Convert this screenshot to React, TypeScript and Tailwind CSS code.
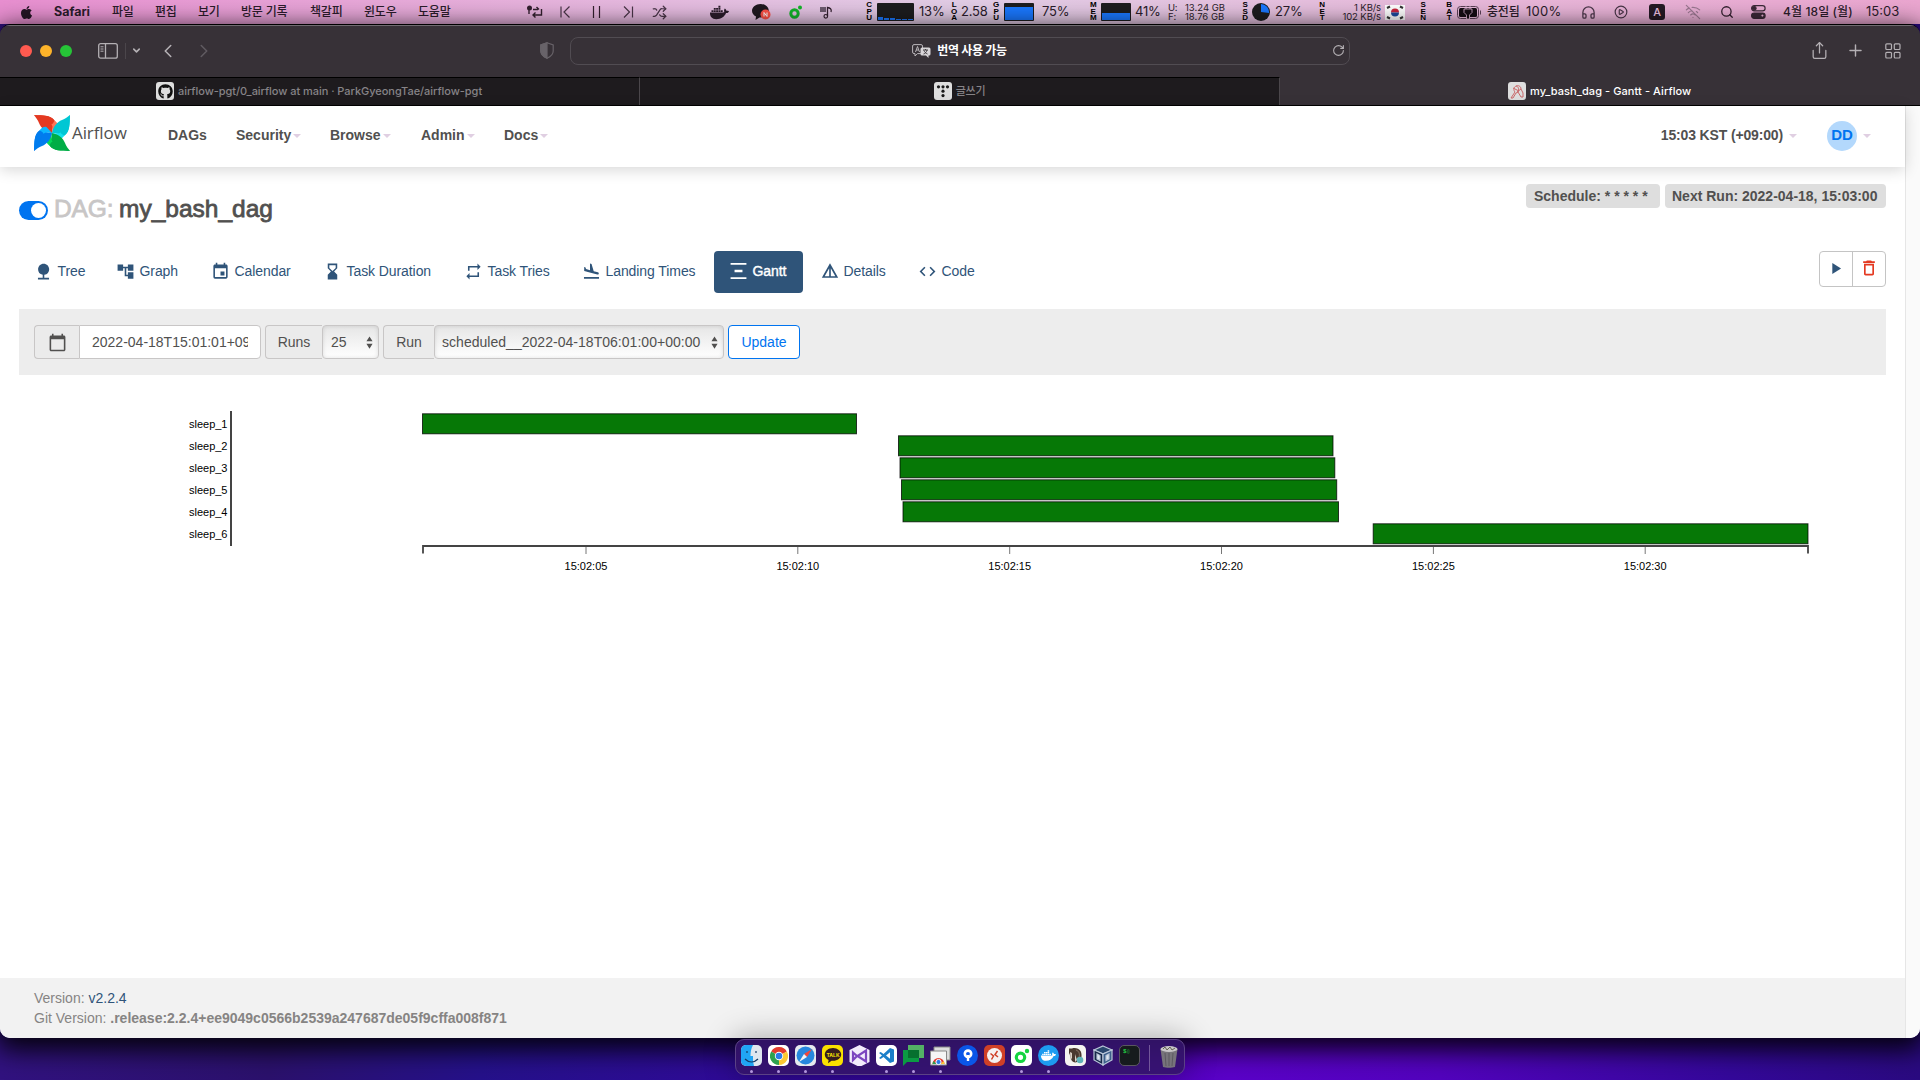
import type { ReactNode } from "react";
import { FaApple, FaDocker, FaGithub } from "react-icons/fa";
import {
  MdAccountTree,
  MdCalendarToday,
  MdCode,
  MdDeleteOutline,
  MdEvent,
  MdFlightLand,
  MdHourglassBottom,
  MdNature,
  MdPlayArrow,
  MdRepeat,
  MdVerticalDistribute,
} from "react-icons/md";
import {
  ChevronDown,
  ChevronLeft,
  ChevronRight,
  CirclePlay,
  Headphones,
  Plus,
  RotateCw,
  Search,
  Share,
  Shuffle,
  WifiOff,
} from "lucide-react";

const MENUS = [
  { label: "파일", w: "w-[43px]" },
  { label: "편집", w: "w-[43px]" },
  { label: "보기", w: "w-[43px]" },
  { label: "방문 기록", w: "w-[69px]" },
  { label: "책갈피", w: "w-[54px]" },
  { label: "윈도우", w: "w-[54px]" },
  { label: "도움말", w: "w-[108px]" },
];

const NAV = [
  { label: "Security", w: "w-[94px]" },
  { label: "Browse", w: "w-[91px]" },
  { label: "Admin", w: "w-[83px]" },
  { label: "Docs", w: "w-[60px]" },
];

const TASKS = [
  { id: "sleep_1", start: 422.5, end: 856.5 },
  { id: "sleep_2", start: 898.5, end: 1333 },
  { id: "sleep_3", start: 900, end: 1334.8 },
  { id: "sleep_5", start: 901.5, end: 1336.7 },
  { id: "sleep_4", start: 903, end: 1338.5 },
  { id: "sleep_6", start: 1373.2, end: 1808 },
];

const TICKS = [
  { x: 586, label: "15:02:05" },
  { x: 797.8, label: "15:02:10" },
  { x: 1009.7, label: "15:02:15" },
  { x: 1221.5, label: "15:02:20" },
  { x: 1433.4, label: "15:02:25" },
  { x: 1645.2, label: "15:02:30" },
];

function Slot({ w, children }: { w: string; children?: ReactNode }) {
  return <div className={`flex h-full shrink-0 items-center whitespace-nowrap ${w}`}>{children}</div>;
}

function Stacked({ text, w }: { text: string; w: string }) {
  return (
    <div className={`flex shrink-0 flex-col font-['Liberation_Sans',sans-serif] text-[8px] leading-[6.700px] font-bold text-black ${w}`}>
      {text.split("").map((c, i) => (
        <span key={i} className="w-[6px] text-center">
          {c}
        </span>
      ))}
    </div>
  );
}

function MenuBar() {
  return (
    <div className="flex h-6 shrink-0 items-center bg-linear-to-r from-[#e88fd0] via-[#e2cde6] to-[#eba6d0] pl-[19px] text-[12px] font-medium tracking-[-0.2px] text-[#2b1c2b]">
      <Slot w="w-[35px]">
        <FaApple className="text-[15px] text-[#251525]" />
      </Slot>
      <Slot w="w-[58px]">
        <span className="text-[12.500px] font-bold tracking-normal">Safari</span>
      </Slot>
      {MENUS.map((m) => (
        <Slot key={m.label} w={m.w}>
          {m.label}
        </Slot>
      ))}
      <Slot w="w-[34px]">
        <svg width="17" height="14" viewBox="0 0 17 14" fill="none" stroke="#33202f" strokeWidth="1.4">
          <circle cx="3.5" cy="3" r="1.8" fill="#33202f" />
          <path d="M3 4v5M7 4.500h5M10.500 2l2.500 2.500M15.500 4v6H7M9.500 7.500L7 10l2.500 2.500" />
        </svg>
      </Slot>
      <Slot w="w-[32px]">
        <svg width="11" height="12" viewBox="0 0 11 12" fill="none" stroke="#4a3548" strokeWidth="1.2">
          <path d="M1 .5v11M9.500 .5L4 6l5.500 5.500" />
        </svg>
      </Slot>
      <Slot w="w-[31px]">
        <svg width="9" height="12" viewBox="0 0 9 12" stroke="#33202f" strokeWidth="1.2">
          <path d="M1.500 0v12M7.500 0v12" />
        </svg>
      </Slot>
      <Slot w="w-[29px]">
        <svg width="11" height="12" viewBox="0 0 11 12" fill="none" stroke="#4a3548" strokeWidth="1.2">
          <path d="M9.500 .5v11M1 .5L6.500 6L1 11.500" />
        </svg>
      </Slot>
      <Slot w="w-[58px]">
        <Shuffle size={15} strokeWidth={2} color="#4a3548" />
      </Slot>
      <Slot w="w-[42px]">
        <FaDocker className="text-[19px]" />
      </Slot>
      <Slot w="w-[37px]">
        <svg width="19" height="17" viewBox="0 0 19 17">
          <path d="M8.500 0C3.800 0 0 3 0 6.800c0 2.400 1.500 4.500 4 5.700L3.500 16l4-2.600h1c4.600 0 8.300-3 8.300-6.700S13 0 8.500 0z" fill="#1f1720" />
          <circle cx="13.500" cy="10.500" r="5" fill="#ff5147" />
          <path d="M12 12.500v-4l3 4v-4" fill="none" stroke="#fff" strokeWidth="1" />
        </svg>
      </Slot>
      <Slot w="w-[31px]">
        <svg width="14" height="14" viewBox="0 0 14 14">
          <circle cx="5.500" cy="8.500" r="3.700" fill="none" stroke="#12b428" strokeWidth="3" />
          <circle cx="11" cy="2.500" r="2" fill="#12b428" />
        </svg>
      </Slot>
      <Slot w="w-[46px]">
        <svg width="13" height="13" viewBox="0 0 13 13">
          <path d="M0 1h6v5H0z" fill="#6d5a6e" />
          <path d="M7.500 10V1.500C10 2 12 3 11 6" fill="none" stroke="#33202f" strokeWidth="1.300" />
          <circle cx="5.800" cy="10.300" r="1.800" fill="none" stroke="#33202f" strokeWidth="1.200" />
        </svg>
      </Slot>
      <Stacked text="CPU" w="w-[11px]" />
      <Slot w="w-[42px]">
        <div className="flex h-[18px] w-[37px] items-end gap-px rounded-[1px] bg-[#1d1d1f] px-px pb-px">
          <div className="h-[3px] w-[5px] bg-[#1a78ff]" />
          <div className="h-[2px] w-[5px] bg-[#1a78ff]" />
          <div className="h-[2px] w-[5px] bg-[#1a78ff]" />
          <div className="h-px w-[5px] bg-[#1a78ff]" />
          <div className="h-px w-[5px] bg-[#1a78ff]" />
          <div className="h-px w-[5px] bg-[#1a78ff]" />
        </div>
      </Slot>
      <Slot w="w-[32px]">
        <span className="text-[13px] font-normal">13%</span>
      </Slot>
      <Stacked text="LOA" w="w-[10px]" />
      <Slot w="w-[32px]">
        <span className="text-[13px] font-normal">2.58</span>
      </Slot>
      <Stacked text="GPU" w="w-[11px]" />
      <Slot w="w-[38px]">
        <div className="flex h-[18px] w-[30px] flex-col justify-end rounded-[1px] bg-[#1d1d1f] p-px">
          <div className="h-[13px] bg-[#1a78ff]" />
        </div>
      </Slot>
      <Slot w="w-[48px]">
        <span className="text-[13px] font-normal">75%</span>
      </Slot>
      <Stacked text="MEM" w="w-[11px]" />
      <Slot w="w-[34px]">
        <div className="flex h-[18px] w-[30px] flex-col justify-end rounded-[1px] bg-[#1d1d1f] p-px">
          <div className="h-[7px] bg-[#1a78ff]" />
        </div>
      </Slot>
      <Slot w="w-[33px]">
        <span className="text-[13px] font-normal">41%</span>
      </Slot>
      <div className="flex w-[17px] shrink-0 flex-col text-[9.500px] leading-[9px] font-normal">
        <span>U:</span>
        <span>F:</span>
      </div>
      <div className="flex w-[57px] shrink-0 flex-col text-[9.500px] leading-[9px] font-normal tracking-normal whitespace-nowrap">
        <span>13.24 GB</span>
        <span>18.76 GB</span>
      </div>
      <Stacked text="SSD" w="w-[10px]" />
      <Slot w="w-[23px]">
        <svg width="18" height="18" viewBox="0 0 18 18">
          <circle cx="9" cy="9" r="9" fill="#1d1d1f" />
          <path d="M9 9V1a8 8 0 0 1 8 9z" fill="#1a78ff" />
        </svg>
      </Slot>
      <Slot w="w-[44px]">
        <span className="text-[13px] font-normal">27%</span>
      </Slot>
      <Stacked text="NET" w="w-[14px]" />
      <div className="flex w-[48px] shrink-0 flex-col items-end text-[9.500px] leading-[9px] font-normal tracking-[-0.100px] whitespace-nowrap">
        <span>1 KB/s</span>
        <span>102 KB/s</span>
      </div>
      <div className="w-[4px] shrink-0" />
      <Slot w="w-[35px]">
        <svg width="20" height="15" viewBox="0 0 20 15">
          <path fill="#fff" d="M0 0h20v15H0z" />
          <path d="M6 7.500a4 4 0 0 1 8 0z" fill="#c8243c" />
          <path d="M6 7.500a4 4 0 0 0 8 0z" fill="#1d4a9c" />
          <path d="M2 3l3-1.500M15 1.500L18 3M2 12l3 1.500M15 13.500l3-1.500" stroke="#333" strokeWidth="2" />
        </svg>
      </Slot>
      <Stacked text="SEN" w="w-[26px]" />
      <Stacked text="BAT" w="w-[11px]" />
      <Slot w="w-[30px]">
        <svg width="25" height="13" viewBox="0 0 25 13">
          <rect x=".5" y=".5" width="21" height="12" rx="3" fill="none" stroke="#5b4257" />
          <rect x="2" y="2" width="18" height="9" rx="1.500" fill="#150d14" />
          <path d="M9 0v3M13 0v3M7 3h8v3.500L12.500 9v4h-3V9L7 6.500z" fill="#150d14" stroke="#e7bddd" strokeWidth=".8" />
          <path d="M23.500 4.500v4" stroke="#5b4257" />
        </svg>
      </Slot>
      <Slot w="w-[39px]">충전됨</Slot>
      <Slot w="w-[55px]">
        <span className="text-[13px] font-normal tracking-[0.300px]">100%</span>
      </Slot>
      <Slot w="w-[33px]">
        <Headphones size={15} strokeWidth={2} color="#4a3548" />
      </Slot>
      <Slot w="w-[35px]">
        <CirclePlay size={14} strokeWidth={2} color="#4a3548" />
      </Slot>
      <Slot w="w-[36px]">
        <span className="flex size-4 items-center justify-center rounded-[3px] bg-[#251a25] text-[11px] text-[#eec3e2]">A</span>
      </Slot>
      <Slot w="w-[35px]">
        <WifiOff size={16} strokeWidth={1.800} color="#9c7892" />
      </Slot>
      <Slot w="w-[31px]">
        <Search size={14} strokeWidth={2.200} color="#33202f" />
      </Slot>
      <Slot w="w-[32px]">
        <svg width="15" height="14" viewBox="0 0 15 14" fill="none" stroke="#3b2837" strokeWidth="1.200">
          <rect x=".6" y=".6" width="13.500" height="5.300" rx="2.600" />
          <circle cx="3.300" cy="3.300" r="1.800" fill="#3b2837" />
          <rect x=".6" y="8" width="13.500" height="5.300" rx="2.600" fill="#3b2837" />
          <circle cx="11.400" cy="10.600" r="1.700" fill="#e9b0d3" />
        </svg>
      </Slot>
      <Slot w="w-[83px]">
        <span className="tracking-[0.100px]">4월 18일 (월)</span>
      </Slot>
      <span className="text-[13px] font-normal tracking-normal">15:03</span>
    </div>
  );
}

function Toolbar() {
  return (
    <div className="flex h-[52px] shrink-0 items-center border-t border-[#6f6b70] bg-[#373137] pb-[2px] text-[#b4b0b4]">
      <div className="flex w-[98px] gap-2 pl-5">
        <div className="size-3 rounded-full bg-[#ff5a50]" />
        <div className="size-3 rounded-full bg-[#fdb32a]" />
        <div className="size-3 rounded-full bg-[#26c437]" />
      </div>
      <svg width="20" height="16" viewBox="0 0 20 16" fill="none" stroke="currentColor" strokeWidth="1.300">
        <rect x=".7" y=".7" width="18.600" height="14.500" rx="2" />
        <path d="M7.500 1v14" />
        <path d="M2.500 3.800h3M2.500 6h3M2.500 8.200h3" strokeWidth="1" />
      </svg>
      <div className="ml-[7px] h-4 w-px bg-[#4b464b]" />
      <ChevronDown className="ml-[5px]" size={11} strokeWidth={3.500} />
      <ChevronLeft className="ml-[15px]" size={22} strokeWidth={1.700} />
      <ChevronRight className="ml-[14px] text-[#5f5a60]" size={22} strokeWidth={1.700} />
      <svg className="ml-[325px]" width="14" height="17" viewBox="0 0 14 17" fill="none" stroke="#686369" strokeWidth="1.200">
        <path d="M7 .8l6.200 2.200v6c0 3.500-3 5.800-6.200 7.200C3.800 14.800.8 12.500.8 9V3z" />
        <path d="M7 .8v15.400C3.800 14.800.8 12.500.8 9V3z" fill="#686369" />
      </svg>
      <div className="ml-4 flex h-7 w-[780px] items-center rounded-lg border border-[#514c52] pr-[4px]">
        <div className="flex grow items-center justify-center pl-[16px] text-[12px] font-bold tracking-[-0.300px] text-white">
          <svg className="mr-[6px]" width="19" height="14" viewBox="0 0 19 14">
            <path d="M2 .6h7a1.500 1.500 0 0 1 1.500 1.500v6A1.500 1.500 0 0 1 9 9.600H5.500L3 12V9.600H2A1.500 1.500 0 0 1 .6 8V2A1.500 1.500 0 0 1 2 .6z" fill="none" stroke="#bab6ba" />
            <path d="M3.500 8L5.500 2.500 7.500 8M4.200 6h2.600" fill="none" stroke="#bab6ba" />
            <path d="M10 3.500h7A1.500 1.500 0 0 1 18.500 5v5a1.500 1.500 0 0 1-1.500 1.500h-.5V14L14 11.500h-4A1.500 1.500 0 0 1 8.500 10V5A1.500 1.500 0 0 1 10 3.500z" fill="#d8d5d8" />
            <path d="M11 6h5M13.500 5v1M11.500 10c2-.5 3-2 3.500-4M12 6.500c.5 1.500 2 3 3.500 3.500" fill="none" stroke="#373137" strokeWidth=".9" />
          </svg>
          번역 사용 가능
        </div>
        <RotateCw size={13} strokeWidth={2} />
      </div>
      <Share className="ml-[460px]" size={19} strokeWidth={1.600} />
      <Plus className="ml-[17px]" size={19} strokeWidth={1.800} />
      <svg className="ml-[20px]" width="16" height="16" viewBox="0 0 16 16" fill="none" stroke="currentColor" strokeWidth="1.200">
        <rect x=".8" y=".8" width="5.700" height="5.700" rx="1" />
        <rect x="9.300" y=".8" width="5.700" height="5.700" rx="1" />
        <rect x=".8" y="9.300" width="5.700" height="5.700" rx="1" />
        <rect x="9.300" y="9.300" width="5.700" height="5.700" rx="1" />
      </svg>
    </div>
  );
}

function TabBar() {
  return (
    <div className="grid h-[29px] shrink-0 grid-cols-3 border-b border-black bg-[#373137] text-[11px] font-medium text-[#868387]">
      <div className="flex items-center justify-center border-t border-r border-t-black border-r-[#4b474b] bg-[#1e1b1e] pb-px">
        <span className="mr-1 flex size-[18px] items-center justify-center rounded-[3px] bg-[#dedede]">
          <FaGithub className="text-[15px] text-[#111]" />
        </span>
        <span className="w-[305px] tracking-[-0.040px] whitespace-nowrap">airflow-pgt/0_airflow at main · ParkGyeongTae/airflow-pgt</span>
      </div>
      <div className="flex items-center justify-center border-t border-r border-t-black border-r-[#4b474b] bg-[#1e1b1e] pb-px">
        <span className="mr-1 flex size-[18px] items-center justify-center rounded-[3px] bg-[#dedede]">
          <svg width="14" height="14" viewBox="0 0 14 14" fill="#1a1a1a">
            <circle cx="2.500" cy="2.800" r="1.600" />
            <circle cx="7" cy="2.800" r="1.600" />
            <circle cx="11.500" cy="2.800" r="1.600" />
            <circle cx="7" cy="7.200" r="1.600" />
            <circle cx="7" cy="11.600" r="1.600" />
          </svg>
        </span>
        <span className="tracking-[-0.300px]">글쓰기</span>
      </div>
      <div className="flex items-center justify-center text-white">
        <span className="mr-1 flex size-[18px] items-center justify-center rounded-[3px] bg-[#dedede]">
          <svg width="16" height="16" viewBox="0 0 16 16" fill="none" stroke="#c9686a" strokeWidth="1">
            <path d="M2 15l4-6c-2-2-1-5 1-6s5 0 5 3l2 4v4h-2l-3-5-2 1-3 5H2zM7 3c3 1 3 3 2 6M4 5l6 3M12 6L8 9" />
          </svg>
        </span>
        <span className="w-[162px] tracking-[0.080px] whitespace-nowrap">my_bash_dag - Gantt - Airflow</span>
      </div>
    </div>
  );
}

function Logo() {
  return (
    <svg className="mb-[6px]" width="36" height="36" viewBox="0 0 36 36">
      {[
        ["#e43921", "#ff7557", "rotate(0 18 18)"],
        ["#00c7d4", "#11e1ee", "rotate(90 18 18)"],
        ["#00ad46", "#04d659", "rotate(180 18 18)"],
        ["#017cee", "#0cb6ff", "rotate(270 18 18)"],
      ].map(([dark, light, turn]) => (
        <g key={dark} transform={turn}>
          <path d="M0 0C9 .5 16 0 20 5L18 18C11 16.500 7 13 5 8 4 5 1.500 2 0 0z" fill={dark} />
          <path d="M20 5C23.500 7.500 25 10.500 24 12.500L18 18C19 14 19 10.500 16.500 8.500z" fill={light} />
          <path d="M0 0C9 .5 17 0 20.500 5.500 19.500 8 18.500 9 17.500 9.500z" fill={dark} />
        </g>
      ))}
    </svg>
  );
}

function Caret({ className = "" }: { className?: string }) {
  return <span className={`inline-block border-x-4 border-t-4 border-x-transparent border-t-[#e0cfe2] ${className}`} />;
}

function PageHeader() {
  return (
    <div className="z-10 flex h-[61px] shrink-0 items-center bg-white pb-[2px] pl-[34px] text-[14px] font-bold text-[#51504f] shadow-[0_3px_14px_rgba(0,0,0,0.160)]">
      <Logo />
      <span className="ml-[2px] w-[96px] pb-[5px] font-['Open_Sans',sans-serif] text-[17px] font-normal tracking-[-0.100px]">Airflow</span>
      <span className="w-[68px]">DAGs</span>
      {NAV.map((n) => (
        <div key={n.label} className={`flex items-center ${n.w}`}>
          {n.label}
          <Caret className="ml-[2px]" />
        </div>
      ))}
      <span className="ml-auto tracking-[-0.150px]">15:03 KST (+09:00)</span>
      <Caret className="ml-[6px]" />
      <span className="ml-[30px] flex size-[30px] items-center justify-center rounded-full bg-[#b3d8fc] text-[15px] text-[#0074f0]">DD</span>
      <Caret className="mr-[34px] ml-[6px]" />
    </div>
  );
}

const DetailsIcon = () => (
  <svg width="18" height="18" viewBox="0 0 24 24" fill="none" stroke="currentColor" strokeWidth="2.200">
    <path d="M12 4L3 20h18zM12 5v15" />
  </svg>
);

const VIEWS: { label: string; w: string; icon: ReactNode; active?: boolean }[] = [
  { label: "Tree", w: "w-[80px]", icon: <MdNature /> },
  { label: "Graph", w: "w-[93px]", icon: <MdAccountTree /> },
  { label: "Calendar", w: "w-[110px]", icon: <MdEvent /> },
  { label: "Task Duration", w: "w-[139px]", icon: <MdHourglassBottom /> },
  { label: "Task Tries", w: "w-[116px]", icon: <MdRepeat /> },
  { label: "Landing Times", w: "w-[145px]", icon: <MdFlightLand /> },
  { label: "Gantt", w: "w-[89px]", icon: <MdVerticalDistribute />, active: true },
  { label: "Details", w: "w-[96px]", icon: <DetailsIcon /> },
  { label: "Code", w: "w-[88px]", icon: <MdCode /> },
];

function DagHeading() {
  return (
    <div className="flex justify-between pt-[17px]">
      <div className="flex items-center pt-[12px] pb-px text-[24.500px] leading-[24px]">
        <div className="mt-[4px] mr-[6px] flex h-[19px] w-[29px] justify-end rounded-full bg-[#0074f0] p-[2px]">
          <div className="size-[15px] rounded-full bg-white" />
        </div>
        <span className="w-[65px] pt-px tracking-[-0.100px] text-[#c8c6c6] [-webkit-text-stroke:0.800px]">DAG:</span>
        <span className="pt-px text-[#51504f] [-webkit-text-stroke:0.800px]">my_bash_dag</span>
      </div>
      <div className="flex h-6 gap-[5px] text-[14px] leading-6 font-bold whitespace-nowrap text-[#51504f]">
        <span className="w-[134px] rounded bg-[#dedede] pl-[8px]">Schedule: * * * * *</span>
        <span className="w-[221px] rounded bg-[#dedede] pl-[7px]">Next Run: 2022-04-18, 15:03:00</span>
      </div>
    </div>
  );
}

function ViewTabs() {
  return (
    <div className="mt-[29px] flex justify-between">
      <div className="flex gap-[2px] text-[14px] tracking-[-0.080px] text-[#2f5479]">
        {VIEWS.map((v) => (
          <div
            key={v.label}
            className={`flex h-[42px] shrink-0 items-center gap-[4.500px] rounded pb-[2px] pl-[15px] whitespace-nowrap ${v.w} ${
              v.active ? "bg-[#2f5479] text-white [-webkit-text-stroke:0.400px]" : ""
            }`}
          >
            <span className={`flex w-[19px] shrink-0 justify-center ${v.active ? "text-[22px]" : "text-[19px]"}`}>{v.icon}</span>
            {v.label}
          </div>
        ))}
      </div>
      <div className="flex h-9 w-[67px] divide-x divide-[#c4c4c4] rounded border border-[#c4c4c4] bg-white">
        <div className="flex flex-1 items-center justify-center pr-px pb-px text-[#2f5479]">
          <MdPlayArrow size={19} />
        </div>
        <div className="flex flex-1 items-center justify-center pr-px pb-[2px] text-[#e43921]">
          <MdDeleteOutline size={20} />
        </div>
      </div>
    </div>
  );
}

function SelectArrows() {
  return (
    <svg width="7" height="13" viewBox="0 0 8 14" fill="#51504f">
      <path d="M4 0l3.500 5.500h-7zM4 14L.5 8.500h7z" />
    </svg>
  );
}

function FilterBar() {
  const addon = "flex items-center justify-center rounded-l border border-r-0 border-[#c8c6c6] bg-[#ebebeb]";
  const select =
    "flex items-center justify-between rounded border border-[#c8c6c6] bg-linear-to-b from-[#e6e6e6] to-white pr-[5px] shadow-[inset_0_0_4px_rgba(0,0,0,0.120)]";
  return (
    <div className="mt-4 flex h-[66px] items-center bg-[#ededed] pl-[15px] text-[14px] whitespace-nowrap text-[#51504f]">
      <div className="flex h-[34px]">
        <div className={`w-[45px] ${addon}`}>
          <MdCalendarToday size={19} />
        </div>
        <div className="flex w-[182px] rounded-r border border-[#c8c6c6] bg-white px-3">
          <input className="w-full min-w-0 outline-none" type="text" defaultValue="2022-04-18T15:01:01+09:00" />
        </div>
      </div>
      <div className="ml-1 flex h-[34px]">
        <div className={`w-[57px] ${addon}`}>Runs</div>
        <div className={`w-[57px] pl-[8px] ${select}`}>
          25
          <SelectArrows />
        </div>
      </div>
      <div className="ml-1 flex h-[34px]">
        <div className={`w-[51px] ${addon}`}>Run</div>
        <div className={`w-[290px] pl-[7px] ${select}`}>
          <span className="tracking-[0.030px]">scheduled__2022-04-18T06:01:00+00:00</span>
          <SelectArrows />
        </div>
      </div>
      <div className="ml-1 flex h-[34px] w-[72px] items-center justify-center rounded border border-[#0074f0] bg-white text-[#0074f0]">
        Update
      </div>
    </div>
  );
}

// Chart origin sits at page x=19, y=375
function GanttChart() {
  return (
    <svg className="block" width="1867" height="215" viewBox="19 375 1867 215" fontSize="11" fill="#000">
      <path d="M231 411v135" stroke="#444" strokeWidth="2" />
      {TASKS.map((t, i) => (
        <g key={t.id}>
          <text x="227.500" y={428 + i * 22} textAnchor="end">
            {t.id}
          </text>
          <rect x={t.start} y={413.8 + i * 22} width={t.end - t.start} height="20" fill="#067806" stroke="#000" strokeOpacity="0.750" />
        </g>
      ))}
      <path d="M423 553.500V546H1808v7.500" fill="none" stroke="#444" strokeWidth="1.800" />
      {TICKS.map((t) => (
        <g key={t.label}>
          <path d={`M${t.x} 547v7`} stroke="#777" />
          <text x={t.x} y="570" textAnchor="middle">
            {t.label}
          </text>
        </g>
      ))}
    </svg>
  );
}

function DockTile({ children, bg, dot }: { children?: ReactNode; bg: string; dot?: boolean }) {
  return (
    <div className="flex w-[27px] flex-col items-center">
      <div className={`flex size-[21px] items-center justify-center overflow-hidden ${bg}`}>{children}</div>
      <div className={`mt-[4px] size-[3px] rounded-full ${dot ? "bg-[#b296dd]" : ""}`} />
    </div>
  );
}

function ChromeMark({ size }: { size: number }) {
  return (
    <svg width={size} height={size} viewBox="0 0 18 18">
      <path d="M9 9L1.200 4.500A9 9 0 0 1 16.800 4.500z" fill="#e33b2e" />
      <path d="M9 9L16.800 4.500A9 9 0 0 1 9 18z" fill="#fcc934" />
      <path d="M9 9v9A9 9 0 0 1 1.200 4.500z" fill="#2ea14f" />
      <circle cx="9" cy="9" r="4.200" fill="#fff" />
      <circle cx="9" cy="9" r="3.300" fill="#2c7be8" />
    </svg>
  );
}

function Dock() {
  return (
    <div className="absolute top-[1039px] left-[735px] flex h-9 w-[450px] rounded-[9px] border border-[#5b4285] bg-[#34146a]/90 pt-[5px] pl-[2px] shadow-[0_0_30px_2px_rgba(0,0,0,0.300)]">
      <DockTile bg="rounded-[5px] bg-[#dfe7ef]" dot>
        <svg width="21" height="21" viewBox="0 0 21 21" fill="none" stroke="#123a66" strokeWidth="1.200">
          <path d="M0 0h12c-2 4-2.500 7-2.500 11H12c0 4 0 6 1 10H0z" fill="#20a5f5" stroke="none" />
          <path d="M6 6v2M15 6v2M4 14c4 4 9 4 13 0" />
        </svg>
      </DockTile>
      <DockTile bg="rounded-[5px] bg-white" dot>
        <ChromeMark size={18} />
      </DockTile>
      <DockTile bg="rounded-[5px] bg-[#e6eaee]" dot>
        <svg width="19" height="19" viewBox="0 0 19 19">
          <circle cx="9.500" cy="9.500" r="9" fill="#2787de" />
          <path d="M16 3L8 8l3 3z" fill="#f0473a" />
          <path d="M3 16l5-8 3 3z" fill="#f4f4f4" />
        </svg>
      </DockTile>
      <DockTile bg="rounded-[5px] bg-[#fae100]" dot>
        <svg width="18" height="17" viewBox="0 0 18 17">
          <path d="M9 1C4.500 1 .8 3.900.8 7.500c0 2.300 1.500 4.300 3.800 5.500L4 16.200l3.600-2.400H9c4.500 0 8.200-2.800 8.200-6.300S13.500 1 9 1z" fill="#371d1e" />
          <text x="9" y="9.500" fontSize="5" fontWeight="bold" textAnchor="middle" fill="#fae100">
            TALK
          </text>
        </svg>
      </DockTile>
      <DockTile bg="">
        <svg width="21" height="22" viewBox="0 0 21 22">
          <path d="M10.500 0L20.500 5v12l-10 5L.5 17V5z" fill="#f2ecfb" />
          <path d="M4 7.500l4 3.500-4 4zM17 5.500v11L8.500 11z" fill="none" stroke="#7c46c0" strokeWidth="2.200" />
        </svg>
      </DockTile>
      <DockTile bg="rounded-[5px] bg-white" dot>
        <svg width="15" height="15" viewBox="0 0 15 15">
          <path d="M11 0l4 1.500v12L11 15 4.500 9 1.700 11 0 10l3-2.500L0 5l1.700-1L4.500 6zm0 4.300L7 7.500l4 3.200z" fill="#1c7fc9" />
        </svg>
      </DockTile>
      <DockTile bg="" dot>
        <svg width="21" height="21" viewBox="0 0 21 21">
          <path d="M5 0h16v13H5z" fill="#53b165" />
          <path d="M0 5h16v12H4l-4 4z" fill="#0b9a43" />
          <path d="M5 5h11v8H5z" fill="#06702f" />
        </svg>
      </DockTile>
      <DockTile bg="" dot>
        <svg width="21" height="21" viewBox="0 0 21 21">
          <path d="M4 2h16v13H4z" fill="#ddd" stroke="#888" />
          <path d="M.5 6h16v14H.5z" fill="#f5f5f5" stroke="#888" />
          <path d="M2.500 19a6 6 0 0 1 12 0z" fill="#e33b2e" />
          <path d="M2.500 19a6 6 0 0 1 1-3l3 3z" fill="#2ea14f" />
          <path d="M14.500 19a6 6 0 0 0-1-3l-3 3z" fill="#fcc934" />
          <circle cx="8.500" cy="17" r="2.600" fill="#2c7be8" stroke="#fff" />
        </svg>
      </DockTile>
      <DockTile bg="rounded-full bg-[#0a56e8]">
        <svg width="12" height="13" viewBox="0 0 12 13">
          <circle cx="6" cy="4.800" r="3.200" fill="none" stroke="#fff" strokeWidth="2.600" />
          <path d="M4.800 6h2.400v6H4.800z" fill="#fff" />
        </svg>
      </DockTile>
      <DockTile bg="rounded-[5px] bg-[#cf4027]">
        <svg width="17" height="17" viewBox="0 0 17 17">
          <circle cx="8.500" cy="8.500" r="7.500" fill="#f5f1f0" />
          <path d="M4.500 6.500L7.500 9 5.500 12.500M11.500 4L9 7.500l3 2.500" fill="none" stroke="#cf4027" strokeWidth="1.500" />
        </svg>
      </DockTile>
      <DockTile bg="rounded-[5px] bg-white" dot>
        <svg width="16" height="16" viewBox="0 0 16 16">
          <circle cx="6.500" cy="9.300" r="4.200" fill="none" stroke="#14d440" strokeWidth="3.200" />
          <circle cx="13" cy="3" r="2.200" fill="#14d440" />
        </svg>
      </DockTile>
      <DockTile bg="rounded-full bg-[#1d9bf0]" dot>
        <FaDocker className="text-[15px] text-white" />
      </DockTile>
      <DockTile bg="rounded-[5px] bg-[#f4f3f0]">
        <svg width="17" height="17" viewBox="0 0 17 17">
          <path d="M2 1.500h3c3-1 7 0 8.500 2.500S15 12 13 13c-3 3-6 3-8 1-2-3-1.500-6-3-8z" fill="#4a382f" />
          <path d="M3 5l2 1v5l-1.500 2zM8 7l2 6-2 2z" fill="#d9cfc6" />
          <path d="M9 3c3 1 4 4 3 7" fill="none" stroke="#8a7568" />
          <circle cx="13" cy="13" r="3.300" fill="#5fb2b8" />
        </svg>
      </DockTile>
      <DockTile bg="">
        <svg width="20" height="21" viewBox="0 0 20 21" stroke="#b9c6d8" strokeWidth="1.200">
          <path d="M10 1l9 4-9 4-9-4z" fill="#29476e" />
          <path d="M1 5l9 4v11l-9-5z" fill="#16294a" />
          <path d="M19 5l-9 4v11l9-5z" fill="#3c5f8a" />
          <path d="M4 9v5l3 1.500v-5zM16 9v5l-3 1.500v-5z" fill="#dfe8f2" />
        </svg>
      </DockTile>
      <DockTile bg="rounded-[5px] border border-[#5a5661] bg-[#161b1d]">
        <span className="mb-2 ml-[-6px] font-['Liberation_Mono',monospace] text-[6px] font-bold text-[#22d142]">$▯</span>
      </DockTile>
      <div className="ml-[6px] h-[26px] w-px bg-[#73579a]" />
      <svg className="ml-[9px]" width="20" height="23" viewBox="0 0 20 23">
        <path d="M1.500 4h17L16 22c-3 1-9 1-12 0z" fill="#77747b" />
        <ellipse cx="10" cy="4" rx="8.500" ry="3" fill="#c9c6c9" />
        <path d="M4 4l2-2 2 3 3-3 2 3 3-2" stroke="#665" fill="none" />
        <path d="M6 8l1 13M10 8v13M14 8l-1 13" stroke="#5c5961" />
      </svg>
    </div>
  );
}

export default function App() {
  return (
    <div className="relative flex h-[1080px] w-[1920px] flex-col overflow-hidden bg-[linear-gradient(90deg,#31127f_0%,#2b116c_14%,#25118a_25%,#3606a0_48%,#5a02c8_64%,#5203bd_75%,#34089a_90%,#2a0a80_100%)] font-['Inter','Noto_Sans_CJK_KR',sans-serif]">
      <MenuBar />
      <div className="flex h-[1014px] shrink-0 flex-col overflow-hidden rounded-[10px] border-t border-black shadow-[0_8px_26px_4px_rgba(0,0,0,0.900)]">
        <Toolbar />
        <TabBar />
        <div className="flex grow bg-white font-['Liberation_Sans',sans-serif]">
          <div className="flex grow flex-col">
            <PageHeader />
            <div className="flex grow flex-col pr-[19px] pl-[19px]">
              <DagHeading />
              <ViewTabs />
              <FilterBar />
              <GanttChart />
            </div>
            <div className="flex h-[60px] shrink-0 flex-col justify-center bg-[#f2f2f2] pl-[34px] text-[14px] leading-5 text-[#868483]">
              <div>
                Version: <span className="text-[#2f5479]">v2.2.4</span>
              </div>
              <div>
                Git Version: <b>.release:2.2.4+ee9049c0566b2539a247687de05f9cffa008f871</b>
              </div>
            </div>
          </div>
          <div className="w-[15px] shrink-0 border-l border-[#e6e6e6] bg-[#fafafa]" />
        </div>
      </div>
      <Dock />
    </div>
  );
}
